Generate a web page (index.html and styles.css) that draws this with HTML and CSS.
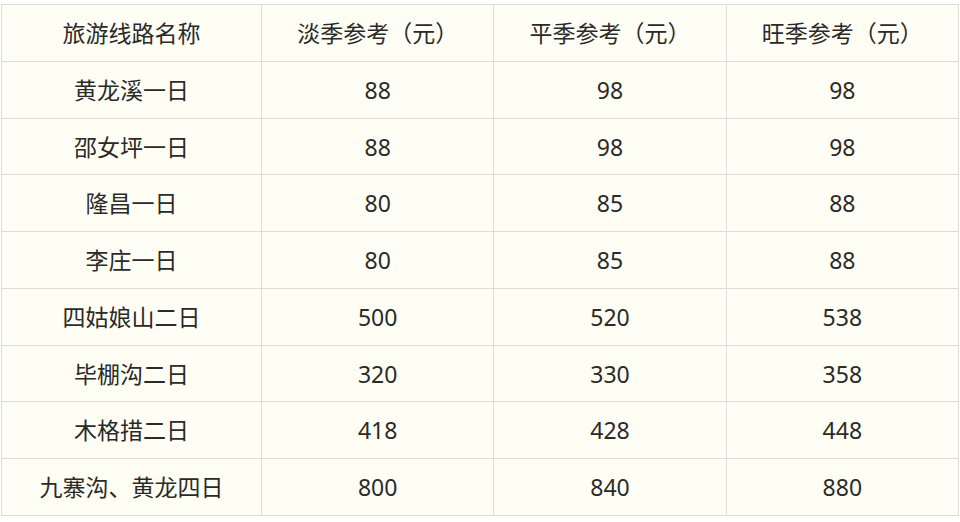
FILE: index.html
```html
<!DOCTYPE html>
<html lang="zh-CN">
<head>
<meta charset="utf-8">
<link rel="stylesheet" href="styles.css">
</head>
<body>
<table class="price">
  <colgroup>
    <col class="c1"><col class="c"><col class="c"><col class="c">
  </colgroup>
  <tr><td>旅游线路名称</td><td>淡季参考（元）</td><td>平季参考（元）</td><td>旺季参考（元）</td></tr>
  <tr><td>黄龙溪一日</td><td>88</td><td>98</td><td>98</td></tr>
  <tr><td>邵女坪一日</td><td>88</td><td>98</td><td>98</td></tr>
  <tr><td>隆昌一日</td><td>80</td><td>85</td><td>88</td></tr>
  <tr><td>李庄一日</td><td>80</td><td>85</td><td>88</td></tr>
  <tr><td>四姑娘山二日</td><td>500</td><td>520</td><td>538</td></tr>
  <tr><td>毕棚沟二日</td><td>320</td><td>330</td><td>358</td></tr>
  <tr><td>木格措二日</td><td>418</td><td>428</td><td>448</td></tr>
  <tr><td>九寨沟、黄龙四日</td><td>800</td><td>840</td><td>880</td></tr>
</table>
</body>
</html>
```

FILE: styles.css
```css
html, body {
  margin: 0;
  background: #ffffff;
}
body {
  padding: 4px 0 0 1px;
  font-family: "Noto Sans", "Noto Sans CJK SC", sans-serif;
  color: #2a2a2a;
}
.price {
  border-collapse: collapse;
  width: 958px;
  table-layout: fixed;
  background: #fffef4;
}
.price .c1 { width: 260px; }
.price tr { height: 56.78px; }
.price td {
  border: 1px solid #dcdcdc;
  text-align: center;
  vertical-align: middle;
  font-size: 23px;
  padding: 2px 0 0;
  line-height: 1.2;
}
```
